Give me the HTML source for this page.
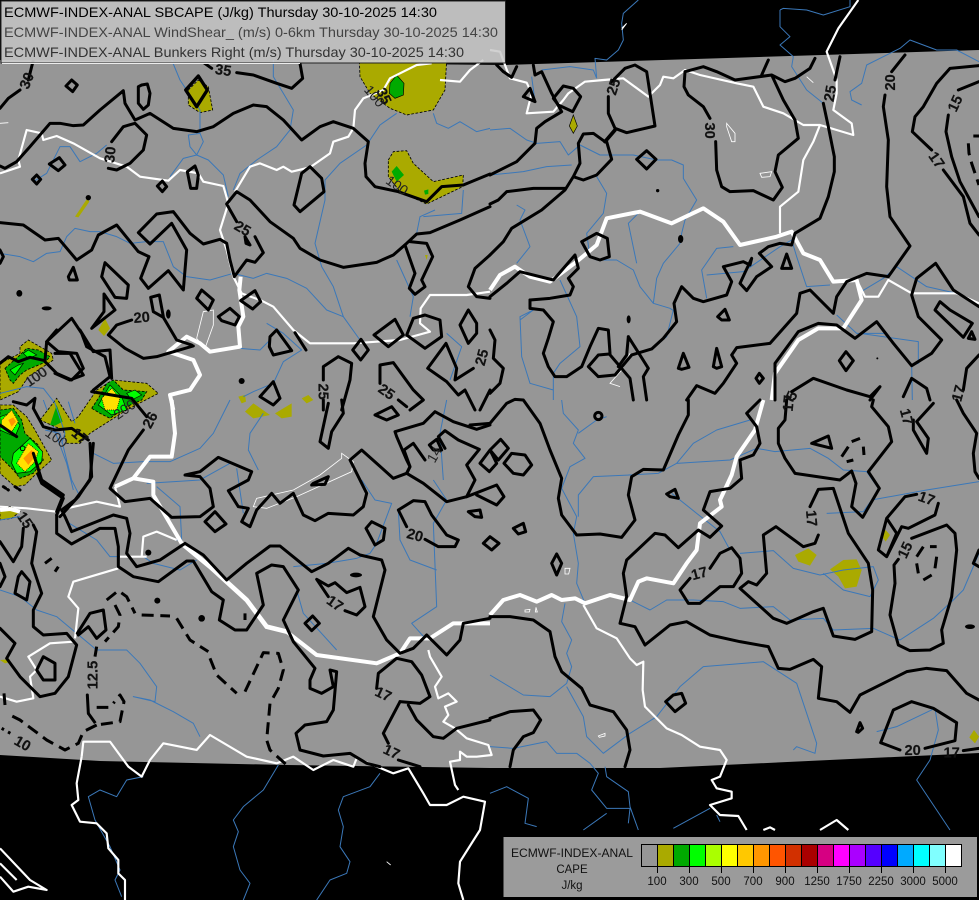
<!DOCTYPE html>
<html><head><meta charset="utf-8"><title>ECMWF-INDEX-ANAL SBCAPE</title>
<style>
html,body{margin:0;padding:0;background:#000;width:979px;height:900px;overflow:hidden}
svg{display:block;position:absolute;left:0;top:0}
.r{fill:none;stroke:#3b78b9;stroke-width:3;stroke-linejoin:round}
.w{fill:none;stroke:#fff;stroke-width:6.5;stroke-linejoin:round}
.wt{fill:none;stroke:#fff;stroke-width:12;stroke-linejoin:round}
.ws{fill:none;stroke:#fff;stroke-width:2.5}
.c{fill:none;stroke:#000;stroke-width:9;stroke-linejoin:round;stroke-linecap:round}
.d{fill:none;stroke:#000;stroke-width:9;stroke-linejoin:round;stroke-dasharray:36 20}
.o{fill:#aaaa00;stroke:#000;stroke-width:2.5;stroke-dasharray:8 5}
.g{fill:#00aa00;stroke:#000;stroke-width:2.5;stroke-dasharray:8 5}
.l{fill:#00ff00;stroke:#000;stroke-width:2}
.a{fill:#aaff00}.y{fill:#ffe000;stroke:#000;stroke-width:2;stroke-dasharray:3 3}.n{fill:#ff9600}
.k{fill:#000}
.t{font:bold 44px "Liberation Sans",sans-serif;fill:#111;text-anchor:middle;stroke:#111;stroke-width:.5}
.t2{font:42px "Liberation Sans",sans-serif;fill:#222;text-anchor:middle}
.h{font:14px "Liberation Sans",sans-serif}
.ll{font:11.5px "Liberation Sans",sans-serif;fill:#111;text-anchor:middle}
</style></head><body>
<svg width="979" height="900" viewBox="0 0 979 900" xmlns="http://www.w3.org/2000/svg">
<rect width="979" height="900" fill="#000"/>
<path d="M0 60 506 65 979 50V753L660 768H490L287 765 100 761 0 755Z" fill="#969696"/>

<!-- top-left quadrant -->
<g transform="translate(0,60) scale(.33333)">
<path class="o" d="M565 90 595 60 625 80 638 150 600 158 565 135Z"/>
<path class="o" d="M1078 0 1340 0 1335 90 1300 150 1220 165 1170 145 1110 100 1080 50Z"/>
<path d="M1170 70 1190 45 1212 70 1210 105 1185 115 1168 100Z" fill="#00aa00" stroke="#000" stroke-width="2"/>
<path class="o" d="M1165 300 1180 275 1220 272 1240 310 1300 365 1390 345 1388 380 1280 432 1200 395 1165 350Z"/>
<path d="M1175 335 1190 318 1212 345 1190 365Z" fill="#00aa00"/>
<path d="M1272 392 1285 388 1285 402 1275 404Z" fill="#00aa00"/>
<path d="M225 470 262 415 268 425 235 472Z" fill="#aaaa00"/>
<path d="M295 810 315 775 330 805 312 828Z" fill="#aaaa00"/>
<path d="M715 1010 735 1005 738 1025 725 1030Z M905 1015 925 1005 940 1020 920 1030Z M1275 585 1283 585 1280 600Z" fill="#aaaa00"/>
<path class="r" d="M515 0 540 60 600 150 600 220 565 225 570 260 590 285 610 245 600 220M590 285 550 295 510 350M590 285 625 300 670 345 685 410M820 0 820 50 880 150 870 210 830 260 770 300 720 340 700 390M1300 160 1310 190 1345 205 1380 185 1430 215 1470 205M1190 160 1140 195 1100 255 1020 310 975 360 975 420 945 550 965 620 1000 680 1030 770 1080 840M1270 470 1385 460 1390 390M1250 520 1260 470 1305 450M0 580 60 590 100 605 140 580 180 575 200 530 225 505 270 515 300 515 350 530 390 550 440 545 490 545 520 620 560 650 630 660 700 640 760 655 800 640 860 655 920 685 980 750 1030 770M100 365 140 340 180 260 210 260 240 305 290 280 320 255M720 865 780 870 810 840M800 790 850 820 905 870 850 905 820 970 760 995 730 1010M1190 600 1240 710 1230 770M1340 820 1385 860 1350 960"/>
<path class="w" d="M0 340 60 320 55 300 80 210 125 220 130 240 170 228 220 250 300 295 380 320 420 350 505 362 540 330 595 340 610 365 670 378 685 430 660 510 680 570 700 650 725 700 785 722 820 740 880 810 930 850 1060 850 1200 840 1290 815 1260 790 1262 745 1290 705 1400 705 1470 695"/>
<path class="wt" d="M722 650 718 690 730 770 715 800 720 860 630 875 600 850 560 830 505 875 580 900 600 945 570 990 510 1005 520 1050"/>
<path class="w" d="M705 395 750 320 780 310 830 330 850 320 875 335 930 322 990 280 1000 245 1045 230 1060 205 1065 150 1090 115 1150 90 1170 55 1250 15 1295 10M1320 60 1380 65 1410 30 1450 0"/>
<path class="ws" d="M640 750 610 755 590 835 615 865 640 795ZM0 190 25 188"/>
<g class="c">
<path d="M0 145 25 115 60 90M85 60 100 0"/>
<path d="M198 78 215 60 232 75 218 95Z"/>
<path d="M415 80 425 75 442 72 450 100 445 135 430 148 415 130Z"/>
<path d="M557 90 595 48 622 90 590 140Z" stroke-width="10"/>
<path d="M0 318 15 325 50 305 90 260 150 190 180 190 220 197 250 195 300 150 370 92 375 130 405 180 450 160 520 205 590 215 640 200 700 160 760 135 800 140 850 180 905 240 960 200 1000 185 1060 205 1105 245 1095 310 1098 350 1125 380 1195 395 1280 425 1325 380 1390 375 1470 342"/>
<path d="M335 245 370 200 405 190 440 225 430 270 390 310 350 330 325 325"/>
<path d="M600 0 635 25M710 38 760 45 830 70 875 85 908 55 900 10"/>
<path d="M148 312 178 293 195 315 175 332ZM97 358 110 345 122 358 110 372ZM472 378 487 363 500 380 487 395ZM562 335 585 318 595 345 590 385 572 385Z"/>
<path d="M905 340 930 320 965 355 972 395 900 455 882 435Z"/>
<path d="M680 432 710 395 750 420 810 485 880 535 900 565 960 600 1030 622 1130 607 1180 585 1220 550 1250 522 1290 518 1380 480 1470 440M680 432 710 485M765 530 790 578 765 607 740 600 703 650 690 600 680 550 660 538 610 552 570 520 520 455 470 462 415 518 450 552 515 490 560 570 550 690 505 632 445 685 422 655 447 590 415 575 350 495 295 525 275 570 230 600 175 535 135 540 70 495 0 488"/>
<path d="M735 530 750 555 738 550Z"/>
<path d="M1230 545 1280 550 1298 590 1265 660 1275 680 1245 703 1228 685 1245 640 1215 555"/>
<path d="M1470 585 1425 625 1405 680 1430 710 1470 715M0 570 10 590 0 610"/>
<path d="M205 650 220 622 232 660 208 660Z"/>
<path d="M315 608 385 675 380 715 345 712 305 650Z"/>
<path d="M312 702 345 750 275 805 312 755Z"/>
<path d="M590 715 605 690 640 720 625 750Z"/>
<path d="M655 770 690 745 718 770 705 795 665 782Z"/>
<path d="M722 722 765 692 782 725 758 747Z"/>
<path d="M395 780 350 795 325 825 375 865 430 895 470 890 580 858M490 770 478 705 452 712 460 755 490 772 530 840 575 855"/>
<path d="M140 845 215 775 245 820 260 860 315 890 330 950 280 990"/>
<path d="M165 880 210 880 250 945 210 960 165 940"/>
<path d="M810 830 830 810 875 872 820 885 808 860Z M885 818 918 870"/>
<path d="M1083 838 1105 870 1082 900 1058 870Z"/>
<path d="M1122 825 1185 778 1210 825 1165 860Z"/>
<path d="M1220 825 1240 775 1275 765 1320 780 1325 830 1275 865Z"/>
<path d="M1405 750 1380 795 1405 850 1430 820 1430 790Z"/>
<path d="M1283 925 1338 850 1370 925 1365 960 1420 925M1283 925 1340 965 1375 1005 1395 990 1425 1050"/>
<path d="M970 960 970 920 1015 890 1055 910 1050 960 1025 1050M970 1020 970 1050"/>
<path d="M1140 970 1140 915 1180 908 1240 990 1270 1020 1230 1050M1195 1020 1220 1040"/>
<path d="M780 1010 820 965 840 1015 820 1035Z"/>
<path d="M1440 1050 1470 990"/>
</g>
<ellipse class="k" cx="58" cy="700" rx="9" ry="10"/><ellipse class="k" cx="140" cy="745" rx="15" ry="6"/><ellipse class="k" cx="505" cy="762" rx="7" ry="14"/><circle class="k" cx="725" cy="963" r="9"/><circle class="k" cx="265" cy="413" r="8"/>
<text class="t" transform="translate(80,62) rotate(-68)" y="15">30</text>
<text class="t" transform="translate(330,284) rotate(-85)" y="15">30</text>
<text class="t" transform="translate(670,30) rotate(8)" y="15">35</text>
<text class="t" transform="translate(1152,108) rotate(65)" y="15">35</text>
<text class="t2" transform="translate(1122,110) rotate(50)" y="12">100</text>
<text class="t2" transform="translate(1190,378) rotate(35)" y="12">100</text>
<text class="t" transform="translate(728,505) rotate(30)" y="15">25</text>
<text class="t" transform="translate(425,772) rotate(-5)" y="15">20</text>
<text class="t" transform="translate(970,995) rotate(90)" y="15">25</text>
<text class="t" transform="translate(1160,995) rotate(35)" y="15">25</text>
<text class="t" transform="translate(1445,892) rotate(-75)" y="15">25</text>
<text class="t2" transform="translate(108,952) rotate(-35)" y="12">100</text>
</g>

<!-- top-right quadrant -->
<g transform="translate(490,0) scale(.33333)">
<path d="M250 345 262 378 250 400 238 378Z" fill="#aaaa00" stroke="#000" stroke-width="2"/>
<path class="r" d="M445 0 400 40 395 70 400 120 385 150 350 180 315 175 320 235M870 30 880 25 950 30 1000 45 1080 20 1080 0M870 30 870 80 900 110 870 135 910 170 905 200 950 270 1000 310M1467 185 1400 150 1340 150 1260 120 1230 145 1130 195 1115 250 1080 275 1085 300 1115 315M0 390 60 385 110 420 140 430 210 425 235 465 270 435 330 465 430 465 500 480 545 480 580 495 580 535 620 600 585 660 575 700 570 730 520 790 500 835 490 910 540 925 555 935M0 525 100 515 170 500 245 495M320 530 350 580 340 640 290 700 300 770 320 780 380 780 430 810 450 860 490 910M445 640 415 670 440 790M80 615 105 630 90 660 120 740 80 790M125 230 135 305M155 210 240 200 310 210 320 235M210 840 260 950 270 1040 210 1090 190 1120 190 1200M90 960 130 930 90 950 95 1070 120 1150 190 1170M550 930 530 1010 490 1040M730 740 680 745 635 810 650 895M650 825 760 815 870 740 905 720 920 770 950 860 1020 855M1105 880 1180 835 1220 800 1310 860 1400 880M1110 1000 1285 1025 1285 1090 1265 1095 1267 1200M1040 945 1100 1000 1190 1000"/>
<path class="w" d="M0 150 30 155 45 195 60 235 110 248 125 280 110 340 190 335 220 300 235 280 285 245 340 240 400 235 475 290 510 255 520 230 550 235 585 210 630 225 740 250 790 260 820 320 880 340 940 375 990 375 1040 390 1090 405 1085 370 1030 330 1040 280 1040 240 1010 155 1045 85 1105 0M990 375 970 425 940 480 925 575 870 620 870 700M1100 840 1125 890 1165 890 1195 840 1265 880 1400 880 1467 910"/>
<path class="wt" d="M0 870 30 825 75 800 120 830 180 845 260 785 320 735 350 655 450 635 545 670 640 625 700 665 750 735 860 710 905 695 940 760 990 780 1030 845 1100 840 1115 900 1060 985 985 985 925 1020 855 1120 845 1200"/>
<path class="ws" d="M710 370 735 400 735 425 725 425 710 380ZM810 520 845 515 840 530 815 532ZM950 230 970 248M395 90 410 70 395 85M420 1060 395 1110 360 1150 390 1160"/>
<g class="c">
<path d="M20 195 40 215 65 232 80 200M130 195 135 225 155 215 185 280 215 335 165 365 140 385 135 430 80 485 0 525"/>
<path d="M100 290 120 265 135 305Z"/>
<path d="M190 295 220 258 250 265 272 290 248 335 205 315Z"/>
<path d="M355 290 355 340 375 385 410 398 495 378 470 215 435 195 405 205 365 245"/>
<path d="M375 390 345 425" stroke-width="11"/>
<path d="M345 425 310 400 280 402 265 430 270 490 250 530 225 570 155 630 65 685 40 725 0 765M250 530 280 540 320 525 365 478 350 425"/>
<path d="M225 565 130 565 50 575 25 600 0 612"/>
<path d="M440 478 470 452 498 478 470 507Z"/>
<path d="M585 215 640 200 680 215 735 240 845 225 885 245 915 235 960 205 975 175M815 225 835 180M585 215 582 260 595 285 640 320 660 355M677 425 680 510 695 560 720 575 790 572 850 600 877 562 855 515 865 465 925 415 915 360 880 300 845 225"/>
<path d="M1000 310 1015 380 1033 470 1033 515 1015 590 990 655 915 700 905 735 870 730 835 740 808 760 845 800 800 830 770 872 750 850 785 775 780 795 760 785 700 800 725 845 710 885 640 905 610 895 575 860 552 910 560 965 520 1015 485 1047 425 1065 375 1125 325 1130 295 1100 325 1065 358 1062 420 1135 430 1200M1035 240 1050 170"/>
<path d="M415 1010 475 1105 460 1130 470 1200M415 1010 410 1065 385 1100"/>
<path d="M0 990 15 1020 10 1075 40 1105 30 1150 0 1180"/>
<path d="M120 900 120 925 160 930 190 965 175 1015 160 1060 175 1100 195 1130 230 1130 275 1100 300 1040 325 985 355 990 360 1060"/>
<path d="M120 900 180 895 240 885 250 860 235 835 265 805 255 765 190 840 90 815 50 850 0 890"/>
<path d="M275 725 320 700 352 715 358 770 330 780 300 770Z"/>
<path d="M683 950 705 928 718 960 695 960Z"/>
<path d="M565 1105 580 1060 597 1102 575 1108ZM670 1100 680 1045 695 1100 680 1105ZM875 805 890 762 905 805Z"/>
<path d="M1245 165 1205 215M1185 285 1180 320 1195 420 1190 560 1200 650 1260 738 1195 830 1130 820 1070 845 1040 890 1030 940 960 870 930 880 920 940 840 1030 740 1043 725 1065 740 1090 700 1150 675 1180 620 1157 590 1200"/>
<path d="M1467 197 1380 205 1340 250 1300 320 1275 350 1267 395 1325 450M1360 510 1420 590 1440 670 1467 705M1405 270 1467 245M1375 345 1368 395 1385 470 1410 545 1467 650"/>
<path d="M1337 790 1280 835 1265 885 1285 950 1355 1020 1325 1060 1265 1097 1210 1030 1160 965 1095 1015 1040 975 985 970 925 995 855 1090 855 1200M1337 790 1390 870 1467 920"/>
<path d="M1350 905 1335 930 1420 1012 1447 970 1380 930Z"/>
<path d="M1435 1015 1455 1018 1445 995Z"/>
<path d="M1068 1055 1090 1082 1068 1112 1048 1082ZM808 1120 820 1135 808 1150 798 1135Z"/>
<path d="M905 1175 970 1135 1070 1170 1140 1190 1170 1160 1140 1200M1240 1190 1265 1135 1310 1165 1320 1200M1467 1065 1430 1105 1420 1170"/>
</g>
<path class="d" d="M1450 408H1467M1435 430 1437 460 1445 490 1467 555"/>
<circle class="k" cx="503" cy="572" r="5"/><ellipse class="k" cx="572" cy="717" rx="8" ry="12"/><ellipse class="k" cx="416" cy="958" rx="6" ry="12"/><circle class="k" cx="1162" cy="1075" r="3"/>
<text class="t" transform="translate(370,260) rotate(-72)" y="15">25</text>
<text class="t" transform="translate(660,392) rotate(90)" y="15">30</text>
<text class="t" transform="translate(1020,280) rotate(-80)" y="15">25</text>
<text class="t" transform="translate(1200,247) rotate(-90)" y="15">20</text>
<text class="t" transform="translate(1340,480) rotate(55)" y="15">17</text>
<text class="t" transform="translate(1395,310) rotate(-65)" y="15">15</text>
<text class="t" transform="translate(905,1187) rotate(-65)" y="15">5</text>
<text class="t" transform="translate(1405,1180) rotate(-75)" y="15">17</text>
</g>

<!-- bottom-left quadrant -->
<g transform="translate(0,400) scale(.33333)">
<path d="M0 780 30 778 28 786 15 790ZM735 35 760 10 810 45 760 55ZM825 40 875 10 875 50 845 55Z" fill="#aaaa00"/>
<path class="r" d="M0 570 60 590 110 630 170 650 230 700 290 750 380 750 420 790 470 860 465 905 400 890 450 900 520 935 580 970 600 1010M130 0 200 190 220 270M135 90 180 100 215 240 240 290M280 160 340 190 430 185 510 185 600 145 640 100 690 0M470 260 540 320 545 420 530 420M200 365 290 420 330 470 430 470 460 490 540 510 590 480M710 205 730 340M775 210 745 150 750 100 790 40M440 250 600 240 690 190M880 500 980 490 1070 475M890 570 910 640 1010 750M1085 240 1125 300 1175 310 1130 430 1110 460 1070 475M1300 240 1340 300 1300 370 1310 620 1235 670 1280 720M1195 330 1200 420 1230 480 1310 510M1340 0 1320 100 1330 240M835 1095 790 1170 730 1220 700 1260 715 1295 700 1340 720 1410 750 1450 730 1500M1140 1120 1110 1160 1030 1190 1015 1230 1030 1280 1020 1340 1050 1385 1040 1420 990 1440 950 1500M430 1130 380 1140 350 1190 300 1170 265 1190 285 1260 330 1340 360 1410 345 1440 365 1490"/>
<path class="wt" d="M515 0 525 100 515 170 450 170 400 235 345 260M400 235 460 245 460 285 545 430"/>
<path class="w" d="M345 260 360 320 290 305 200 325 180 345"/>
<path d="M545 430 630 500 740 600 800 680 860 695" fill="none" stroke="#fff" stroke-width="14"/>
<path class="wt" d="M860 695 950 765 1130 790 1200 760 1230 715 1290 715 1360 670 1470 670"/>
<path class="w" d="M0 320 80 325 170 335M0 890 50 905 100 895 90 830 110 810 85 770 150 730 220 725M355 505 220 545 205 590 235 625 225 715M425 470 430 410 470 395 530 420M360 470 440 470M1285 750 1290 770 1325 830 1305 860 1315 895 1345 880 1370 905 1335 920 1345 945 1330 965 1365 985 1400 1015 1465 1035 1475 1065 1430 1070 1400 1070 1380 1055 1380 1080 1350 1085 1365 1155 1375 1170M245 1070 250 1025 330 1025 385 1100 425 1130 450 1080 490 1030 590 1050 630 1005 740 1070 830 1090 880 1070 940 1110 1000 1080 1060 1100 1070 1075 1180 1120 1225 1105 1270 1180 1290 1215 1340 1215 1390 1190 1455 1205 1440 1290 1380 1385 1375 1450 1390 1500M245 1070 230 1150 235 1200 215 1215 240 1265 290 1270 320 1300 325 1345 355 1380 355 1420 375 1440 375 1500M0 1345 90 1440 140 1470 85 1460 40 1475 0 1430M0 1390 50 1440"/>
<path class="ws" d="M1025 160 1060 185 1055 215 890 290 800 325 760 320 770 295 880 270 960 225 1025 175ZM1160 1385 1172 1395"/>
<g class="c">
<path d="M430 90 385 150 330 265 375 305 450 295 515 352 600 350 640 320 630 265 600 230 555 225 600 215 655 172 755 215 745 240 685 272 715 320 745 325 725 365 750 380 770 330 815 280 840 310 880 280 910 345 945 362 985 340 1060 345 1090 320 1100 280 1050 180 1085 150 1130 190 1180 235 1220 220 1230 200 1220 180 1190 110 1185 95 1270 70 1305 35 1360 65 1430 88 1470 75"/>
<path d="M1125 45 1175 20 1195 45 1160 60Z"/>
<path d="M985 10 960 125 985 145 995 95 1030 40 1025 0"/>
<path d="M940 250 985 230 975 253 935 255Z"/>
<path d="M645 395 615 365 645 335 678 372Z"/>
<path d="M1098 385 1115 365 1155 385 1150 420 1125 435Z"/>
<path d="M170 345 170 400 215 432 300 385 345 385 355 440 355 500 400 530 475 545 560 483 580 483 635 575 670 600 658 660 705 690 740 690 790 615 770 520 815 495 850 500 895 570 850 660 880 725 945 805 930 840 930 865 965 880 1000 860 990 810 1010 815 1000 930 980 965 915 975 888 1000 900 1050 970 1068 1050 1060 1100 1090 1140 1100"/>
<path d="M185 330 195 350 215 395 340 345 380 355 390 400 380 460 410 500 480 480 555 430 610 465 680 540 740 490 810 438 840 438 935 515 985 490 1045 445 1080 465 1145 480 1155 510 1120 650 1160 720 1200 760 1240 745 1280 705 1340 765 1380 720 1390 670 1470 655"/>
<path d="M985 590 950 538 985 558 1005 548 1040 578 1080 562 1095 620 1070 645 1035 632"/>
<path d="M915 670 938 648 958 670 935 692Z"/>
<path d="M1130 865 1135 820 1190 775 1235 785 1265 825 1290 890 1260 910 1200 905"/>
<path d="M1200 905 1150 1000 1165 1030M1195 1080 1260 1100M1225 915 1250 960 1300 1010 1330 1015 1370 985 1470 960"/>
<path d="M232 700 270 640 310 630 318 690 290 715 265 680 235 705"/>
<path d="M110 810 130 770 165 790 165 840 130 840Z"/>
<path d="M0 685 45 730 20 775 60 830 120 890 165 880 205 830 230 735 200 700 130 705 100 680 100 630 125 580 95 490 110 395 100 375"/>
<path d="M70 385 65 440 40 485 0 425M0 490 15 530 0 560"/>
<path d="M65 515 90 545 80 600 45 580 55 530Z"/>
<path d="M100 190 125 250 190 295 170 345M280 130 270 240 225 300 185 330"/>
<path d="M262 885 265 940"/>
</g>
<g class="d">
<path d="M320 600 355 572 380 590 405 640M345 615 360 645 355 680 315 725M425 645 510 648M530 655 570 720 625 755M630 775 650 825 710 880M735 875 790 758 835 760 850 810 835 865 810 910 800 1020 810 1050 860 1095M290 740 285 770M265 940 290 975 360 965 372 905 360 885 340 910M290 922 325 922M290 975 250 995 235 1030 195 1050 140 1020 60 960 20 940M12 880 15 915M735 640V660M135 490 155 475M165 515 175 500"/>
<path d="M5 985 40 1005" stroke-dasharray="8 14"/>
</g>
<ellipse class="k" cx="1068" cy="525" rx="18" ry="7"/><circle class="k" cx="445" cy="458" r="9"/><circle class="k" cx="472" cy="602" r="9"/><circle class="k" cx="605" cy="655" r="10"/>
<text class="t" transform="translate(450,60) rotate(-62)" y="15">26</text>
<text class="t" transform="translate(1005,610) rotate(35)" y="15">17</text>
<text class="t" transform="translate(1150,882) rotate(25)" y="15">17</text>
<text class="t" transform="translate(1175,1055) rotate(25)" y="15">17</text>
<text class="t" transform="translate(278,825) rotate(-90)" y="15">12.5</text>
<text class="t" transform="translate(68,1030) rotate(30)" y="15">10</text>
<text class="t" transform="translate(75,360) rotate(55)" y="15">15</text>
</g>

<!-- bottom-right quadrant -->
<g transform="translate(490,400) scale(.33333)">
<path d="M915 465 955 445 980 465 960 497 925 485ZM1020 508 1060 480 1100 478 1115 510 1100 560 1065 565 1045 530ZM1187 390 1200 405 1187 425 1173 405ZM1452 990 1467 1010 1455 1030 1438 1012Z" fill="#aaaa00"/>
<path class="r" d="M215 0 220 40 265 90 250 130 285 175 240 200 215 265 260 350 250 400 265 490 260 550 285 610M350 50 320 60 265 100M420 225 310 230 265 285 265 350M415 225 505 220 560 190 720 180 800 145 855 155 960 145 1015 175 1060 210 1130 215 1165 265 1145 300 1120 335 1010 340M780 60 680 90 610 130 560 190M545 280 620 340 690 395 720 450M750 460 850 452 910 505 990 525 1060 510 1150 500 1165 540 1140 590 1060 570 1000 520M420 600 480 630 530 600 610 600 700 605 750 625 850 620 900 660 1000 655 1030 690 1150 685 1230 720 1330 655 1390 600 1420 570 1467 460M1145 300 1310 270 1467 245M225 610 215 665 245 720 230 760 245 800 230 850 180 890 100 885 0 825M230 860 280 950 290 1010 340 1060 420 1000 500 950 570 860 640 800 820 785 920 850 980 1030 975 1060 920 1040 910 1050M0 1040 70 1045 170 1025 200 1060 260 1060 300 1090 325 1120 305 1170 350 1225 420 1225 415 1270M345 1100 350 1130 415 1175 420 1220 445 1290M1160 995 1220 980 1335 925 1345 990 1320 1080 1280 1140 1340 1230 1380 1290M0 1180 50 1160 115 1195 105 1270 140 1280M280 1290 350 1240M660 1225 550 1285M680 1245 690 1265"/>
<path class="wt" d="M820 0 795 90 740 170 725 225 690 300 695 320 630 370 620 450 590 490 550 550 470 535 445 545 420 600 360 585 285 610 255 595 215 600 185 585 140 605 90 585 40 600 0 645"/>
<path class="w" d="M280 615 320 685 380 715 420 775 440 795 460 785 458 870 465 920 530 985 575 1005 630 1040 690 1050 710 1080 690 1130 665 1140 680 1165 725 1175 725 1195 660 1215 690 1245 745 1248 770 1290M820 1290 840 1282 855 1290M990 1290 1040 1260 1075 1290"/>
<path class="ws" d="M105 630 120 628 118 636 105 636ZM138 622 142 636 136 636ZM225 505 240 505 236 522 225 522ZM325 1008 345 1000 345 1008 328 1012Z"/>
<g class="c">
<path d="M-60 75 0 70 50 10 75 -2 100 0 150 70 180 150 215 235 205 295 215 345 260 405 330 402 395 412 435 360 415 285 425 230 460 208 520 210 565 105 595 45 595 0"/>
<circle cx="325" cy="48" r="11"/>
<path d="M185 490 200 462 215 490 200 525ZM530 282 555 268 565 295 540 290Z"/>
<path d="M810 0 770 40 800 80 810 130 790 165 750 180 755 235 720 265 660 275 640 330 695 378 660 412 625 390 565 443 525 405 495 400 410 480 400 520 410 590 390 670 435 680 465 735 540 675 590 665 660 705 750 725 835 740 865 805 900 808 970 778 995 800 985 895 1040 905 1080 937 1110 885 1250 815 1310 805 1370 812 1430 880 1467 900"/>
<path d="M660 505 690 460 725 443 750 475 755 520 730 560 690 560 630 610 595 610 570 570 600 535"/>
<path d="M890 0 885 60 865 85 865 130 885 175 915 220 1050 240 1085 213 1098 250 1085 320 1118 352 1168 265 1135 215 1205 125 1195 80 1145 20 1150 0"/>
<path d="M1330 10 1280 65 1315 115 1310 160 1270 90 1270 60M1400 0 1420 40 1460 100 1450 160 1455 215 1467 235M1467 450 1450 490 1467 500"/>
<path d="M960 320 985 268 1030 265 1075 400 1135 490 1148 570 1145 695 1095 718 1030 708 1000 625 970 635 890 670 850 655 750 565 775 545 800 555 830 520 820 405 858 380 940 440 975 430 985 405"/>
<path d="M965 130 1015 108 1025 145 985 135Z"/>
<path d="M1280 283 1245 290 1190 355 1165 450 1190 470 1235 380 1255 385 1335 345 1345 310M1190 355 1220 400 1190 470"/>
<path d="M1265 415 1370 375 1395 400 1400 450 1385 590 1355 690 1360 730 1320 750 1260 752 1225 735 1200 645 1215 550 1212 495 1225 478"/>
<path d="M0 650 60 650 130 660 180 695 195 770 215 815 275 865 300 915 370 935 410 990 420 1050 405 1100"/>
<path d="M0 955 60 935 130 930 152 960 130 998 100 1010 70 1050 60 1100"/>
<path d="M527 905 550 885 575 880 587 910 555 935Z"/>
<path d="M1100 995 1110 968 1118 985 1105 997Z"/>
<path d="M1230 1050 1172 1028 1210 930 1265 905 1330 925 1400 968 1395 1022 1305 1045M1420 1052 1467 1045"/>
</g>
<path class="d" stroke-dasharray="24 14" d="M1055 170 1075 140M1085 125 1110 115M1120 140 1122 165M1090 180 1070 185M1280 470 1300 440 1340 440M1340 470 1335 505M1325 525 1300 540M1285 520 1280 490"/>
<ellipse class="k" cx="1440" cy="680" rx="15" ry="7"/>
<text class="t" transform="translate(628,520) rotate(-15)" y="15">17</text>
<text class="t" transform="translate(965,355) rotate(85)" y="15">17</text>
<text class="t" transform="translate(1250,50) rotate(75)" y="15">17</text>
<text class="t" transform="translate(1310,295) rotate(20)" y="15">17</text>
<text class="t" transform="translate(1245,450) rotate(-65)" y="15">15</text>
<text class="t" transform="translate(895,10) rotate(-85)" y="15">17</text>
<text class="t" transform="translate(1268,1050)" y="15">20</text>
<text class="t" transform="translate(1385,1058)" y="15">17</text>
</g>

<!-- centre detail -->
<g transform="translate(380,380) scale(.33333)">
<g class="c">
<path d="M135 240 100 190 72 210 90 260 80 280 130 310 200 365 260 350 285 300 260 255 298 208 235 180 195 152 175 170 195 205"/>
<path d="M260 350 350 315 372 350 350 375 290 345"/>
<path d="M148 195 170 178 185 210 160 210Z"/>
<path d="M300 250 330 210 350 250 328 275ZM330 210 362 178 385 205 355 240ZM372 250 395 220 435 225 455 255 430 285 400 280Z"/>
<path d="M265 395 300 390 305 412 285 410ZM400 445 430 430 437 455 415 462ZM310 490 330 470 357 490 335 510Z"/>
<path d="M80 440 55 390 100 362 135 365 155 405 200 465 235 480 225 500 175 500 135 478"/>
</g>
<text class="t" transform="translate(105,465) rotate(15)" y="15">20</text>
<text class="t2" transform="translate(165,225) rotate(-60)" y="12">14</text>
</g>

<!-- convective cells, left -->
<g transform="translate(0,330) scale(.33333)">
<path class="o" d="M0 100 60 70 60 50 85 30 155 70 160 90 145 100 85 140 55 185 0 210Z"/>
<path class="g" d="M15 115 60 75 80 55 115 60 150 80 135 97 80 120 60 135 40 160 30 150Z"/>
<path class="l" d="M30 120 55 105 70 100 45 135ZM70 70 85 60 110 75 85 85Z"/>
<path class="o" d="M0 225 40 225 80 260 105 300 155 390 110 430 75 465 45 470 0 430Z"/>
<path class="g" d="M0 240 40 235 65 270 75 310 115 345 130 390 100 430 60 445 40 420 0 380Z"/>
<path class="l" d="M0 260 30 250 60 285 45 320 0 300ZM40 370 90 325 128 365 125 395 90 425 50 430 35 400Z"/>
<path class="y" d="M5 270 35 240 55 275 35 305 5 290ZM50 400 85 340 115 365 105 395 75 425Z"/>
<path class="n" d="M25 270 40 262 48 275 35 290ZM70 385 95 360 108 375 85 405Z"/>
<path class="o" d="M120 270 170 205 215 275 235 260 290 180 340 150 440 160 475 190 380 240 270 310 240 340 200 340 190 300 165 290Z"/>
<path class="g" d="M275 235 295 205 320 160 340 150 370 180 440 185 425 210 380 230 330 265 300 250Z"/>
<path class="l" d="M295 225 330 165 365 200 380 240 335 255ZM380 190 405 180 425 195 395 210Z"/>
<path class="y" d="M305 205 335 175 360 205 350 240 315 240Z"/>
<path fill="#00aa00" d="M150 285 170 225 188 275 165 287Z"/>
<path class="o" d="M0 540 30 530 60 545 35 565 0 570Z"/>
<path class="wt" d="M0 540 30 537 60 545"/>
<path class="r" d="M0 190 80 170 130 175 165 220 195 310 185 340M205 215 225 280M0 570 60 560"/>
<g class="c">
<path d="M0 100 25 80 55 95 90 82 135 92 140 35 170 0M140 35 175 65 230 70 250 115 215 150 170 130 135 95M240 0 280 65 330 60 335 145"/>
<path d="M275 185 335 195 395 205 440 260"/>
<path d="M0 285 50 320M40 215 80 225 105 205 100 235 130 290 165 300 215 295 265 330"/>
<path d="M100 370 125 450 190 495 170 545"/>
<path d="M10 470 25 480M45 470 60 480" stroke-dasharray="8 8"/>
<path d="M270 340 275 440 235 500 180 560"/>
</g>
<circle cx="68" cy="355" r="7" fill="none" stroke="#000" stroke-width="3"/>
<text class="t2" transform="translate(110,142) rotate(-35)" y="12">100</text>
<text class="t2" transform="translate(168,325) rotate(35)" y="12">100</text>
<text class="t2" transform="translate(375,240) rotate(-35)" y="12">200</text>
<text class="t" transform="translate(240,318) rotate(40)" y="15">17</text>
</g>

<!-- header -->
<rect x="1" y="1" width="504.5" height="62" fill="#cdcdcd" fill-opacity=".92" stroke="#222" stroke-width="1"/>
<path d="M2 63.5H300" stroke="#ececec" stroke-width="1"/>
<text class="h" x="4" y="17" fill="#000" textLength="433" lengthAdjust="spacingAndGlyphs">ECMWF-INDEX-ANAL SBCAPE (J/kg) Thursday 30-10-2025 14:30</text>
<text class="h" x="4" y="37" fill="#444" textLength="494" lengthAdjust="spacingAndGlyphs">ECMWF-INDEX-ANAL WindShear_ (m/s) 0-6km Thursday 30-10-2025 14:30</text>
<text class="h" x="4" y="57" fill="#333" textLength="460" lengthAdjust="spacingAndGlyphs">ECMWF-INDEX-ANAL Bunkers Right (m/s) Thursday 30-10-2025 14:30</text>

<!-- legend -->
<rect x="503.5" y="837" width="473.5" height="60" fill="#9b9b9b"/>
<g stroke="#000" stroke-width="1">
<rect x="641.5" y="844.5" width="16" height="22" fill="#969696"/>
<rect x="657.5" y="844.5" width="16" height="22" fill="#aaaa00"/>
<rect x="673.5" y="844.5" width="16" height="22" fill="#00aa00"/>
<rect x="689.5" y="844.5" width="16" height="22" fill="#00ff00"/>
<rect x="705.5" y="844.5" width="16" height="22" fill="#aaff00"/>
<rect x="721.5" y="844.5" width="16" height="22" fill="#ffff00"/>
<rect x="737.5" y="844.5" width="16" height="22" fill="#ffc800"/>
<rect x="753.5" y="844.5" width="16" height="22" fill="#ff9600"/>
<rect x="769.5" y="844.5" width="16" height="22" fill="#ff5500"/>
<rect x="785.5" y="844.5" width="16" height="22" fill="#d23000"/>
<rect x="801.5" y="844.5" width="16" height="22" fill="#aa0000"/>
<rect x="817.5" y="844.5" width="16" height="22" fill="#d60082"/>
<rect x="833.5" y="844.5" width="16" height="22" fill="#ff00ff"/>
<rect x="849.5" y="844.5" width="16" height="22" fill="#aa00ff"/>
<rect x="865.5" y="844.5" width="16" height="22" fill="#5500ff"/>
<rect x="881.5" y="844.5" width="16" height="22" fill="#0000ff"/>
<rect x="897.5" y="844.5" width="16" height="22" fill="#00aaff"/>
<rect x="913.5" y="844.5" width="16" height="22" fill="#00ffff"/>
<rect x="929.5" y="844.5" width="16" height="22" fill="#80ffff"/>
<rect x="945.5" y="844.5" width="16" height="22" fill="#ffffff"/>
<path d="M657.5 866V873M689.5 866V873M721.5 866V873M753.5 866V873M785.5 866V873M817.5 866V873M849.5 866V873M881.5 866V873M913.5 866V873M945.5 866V873"/>
</g>
<text class="ll" x="572" y="857" textLength="122" lengthAdjust="spacingAndGlyphs">ECMWF-INDEX-ANAL</text>
<text class="ll" x="572" y="873">CAPE</text>
<text class="ll" x="572" y="889">J/kg</text>
<text class="ll" x="657" y="885">100</text><text class="ll" x="689" y="885">300</text><text class="ll" x="721" y="885">500</text><text class="ll" x="753" y="885">700</text><text class="ll" x="785" y="885">900</text><text class="ll" x="817" y="885">1250</text><text class="ll" x="849" y="885">1750</text><text class="ll" x="881" y="885">2250</text><text class="ll" x="913" y="885">3000</text><text class="ll" x="945" y="885">5000</text>
</svg>
</body></html>
